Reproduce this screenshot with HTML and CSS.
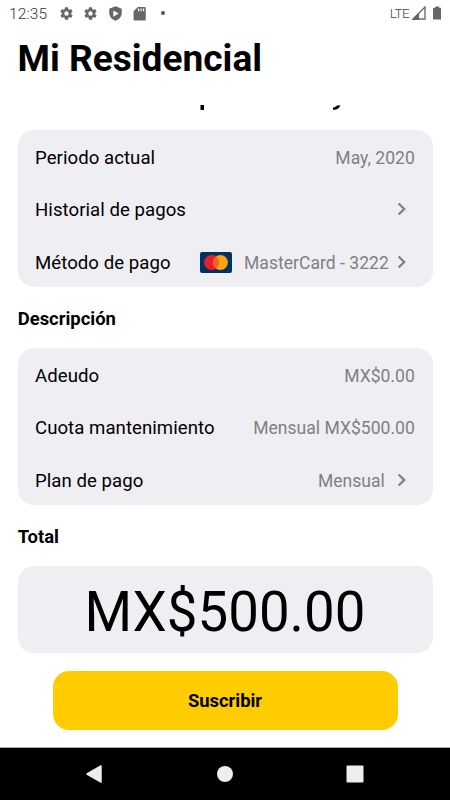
FILE: index.html
```html
<!DOCTYPE html>
<html lang="es">
<head>
<meta charset="utf-8">
<title>Mi Residencial</title>
<link rel="stylesheet" href="styles.css">
</head>
<body>
<svg class="defs" width="0" height="0" aria-hidden="true">
  <symbol id="gear" viewBox="0 0 24 24"><path fill-rule="evenodd" d="M19.4 13a7.800 7.800 0 0 0 0-2l2.100-1.650a.5.5 0 0 0 .12-.64l-2-3.460a.5.5 0 0 0-.61-.22l-2.490 1a7.300 7.300 0 0 0-1.690-.98l-.38-2.650A.49.49 0 0 0 14 2h-4a.49.49 0 0 0-.49.42l-.38 2.650c-.61.25-1.170.59-1.690.98l-2.490-1a.49.49 0 0 0-.61.22l-2 3.460a.49.49 0 0 0 .12.64L4.600 11a7.900 7.900 0 0 0 0 2l-2.110 1.650a.5.5 0 0 0-.12.64l2 3.460c.12.22.39.3.61.22l2.490-1c.52.4 1.080.73 1.690.98l.38 2.650c.03.24.24.42.49.42h4c.25 0 .46-.18.49-.42l.38-2.650a7.700 7.700 0 0 0 1.690-.98l2.490 1c.23.09.49 0 .61-.22l2-3.460a.5.5 0 0 0-.12-.64zM12 15.500a3.500 3.500 0 1 1 0-7 3.500 3.500 0 0 1 0 7z"/></symbol>
  <symbol id="chevron" viewBox="0 0 10 14"><path d="M1.600 1.500 7.200 7 1.600 12.500" fill="none" stroke="currentColor" stroke-width="2.300"/></symbol>
</svg>
<div class="screen">
  <header class="status">
    <span class="clock">12:35</span>
    <svg class="status-icon"><use href="#gear"/></svg>
    <svg class="status-icon"><use href="#gear"/></svg>
    <svg class="status-icon" viewBox="0 0 24 24"><path fill-rule="evenodd" d="M12 .5 2 4.500V11c0 5.800 4.200 10.600 10 12.500 5.800-1.900 10-6.700 10-12.500V4.500zM8.500 7v10l8.500-5z"/></svg>
    <svg class="status-icon" viewBox="0 0 24 24"><path fill-rule="evenodd" d="M20 1.500H9.500L2.500 8.500V21c0 1.100.9 2 2 2H20c1.100 0 2-.9 2-2V3.500c0-1.100-.9-2-2-2zM9.500 4h2v4.500h-2zm4 0h2v4.500h-2zm4 0h2v4.500h-2z"/></svg>
    <i class="dot"></i>
    <span class="network">LTE</span>
    <svg class="signal" viewBox="0 0 14 14"><path d="M13 1v12H1z" fill="none" stroke="#666" stroke-width="1.300"/><path d="M0 14 7 7v7z"/></svg>
    <svg class="battery" viewBox="0 0 9 14"><path d="M2.500 0h4v1.500H8a1 1 0 0 1 1 1V13a1 1 0 0 1-1 1H1a1 1 0 0 1-1-1V2.500a1 1 0 0 1 1-1h1.500z"/></svg>
  </header>
  <h1>Mi Residencial</h1>
  <!-- descenders of the heading scrolled under the title bar -->
  <svg class="scrolled" viewBox="0 0 450 5"><path d="M200.500 0h3.500v5h-3.500zM336.500 .8 340.300 0Q339 4.500 335 4.700L333 4.700V2.700Q335.500 2.500 336.500 .8z"/></svg>
  <main>
    <section class="card">
      <div class="row"><span>Periodo actual</span><span class="value">May, 2020</span></div>
      <div class="row"><span>Historial de pagos</span><svg class="chevron"><use href="#chevron"/></svg></div>
      <div class="row"><span>Método de pago</span>
        <svg class="brand" viewBox="0 0 32 21"><rect width="32" height="21" rx="2" fill="#003262"/><circle cx="11.600" cy="10.500" r="7.500" fill="#ed1c2e"/><circle cx="20.400" cy="10.500" r="7.500" fill="#fca311"/><path d="M16 4.430a7.500 7.500 0 0 1 0 12.140 7.500 7.500 0 0 1 0-12.140z" fill="#f26122"/></svg>
        <span class="value">MasterCard - 3222</span><svg class="chevron"><use href="#chevron"/></svg></div>
    </section>
    <h2>Descripción</h2>
    <section class="card">
      <div class="row"><span>Adeudo</span><span class="value">MX$0.00</span></div>
      <div class="row"><span>Cuota mantenimiento</span><span class="value">Mensual MX$500.00</span></div>
      <div class="row"><span>Plan de pago</span><span class="value plan">Mensual</span><svg class="chevron"><use href="#chevron"/></svg></div>
    </section>
    <h2>Total</h2>
    <section class="card total"><span>MX$500.00</span></section>
    <button class="subscribe">Suscribir</button>
  </main>
  <nav class="navbar">
    <svg viewBox="0 0 18 18"><path d="M16 1v16L2 9z" fill="#eee" stroke="#eee" stroke-linejoin="round" stroke-width="1.500"/></svg>
    <svg viewBox="0 0 18 18"><circle cx="9" cy="9" r="8" fill="#eee"/></svg>
    <svg viewBox="0 0 18 18"><rect x=".5" y=".5" width="17" height="17" rx="1" fill="#eee"/></svg>
  </nav>
</div>
</body>
</html>
```
FILE: styles.css
```css
* { box-sizing: border-box; }
body { margin: 0; font-family: Roboto, sans-serif; background: #fff; color: #000; }
svg { display: block; flex: none; }
.defs { position: absolute; }
.screen { width: 450px; height: 800px; overflow: hidden; display: flex; flex-direction: column; }
.status { height: 26px; flex: none; display: flex; align-items: center; padding: 0 9px; color: #666; fill: #666; }
.clock { width: 50px; font-size: 15.500px; letter-spacing: .1px; line-height: 26px; padding-top: 2px; font-weight: 300; color: #333; }
.status-icon { width: 15px; height: 15px; margin-right: 9.300px; }
.dot { width: 4px; height: 4px; border-radius: 50%; background: #555; margin-left: 5px; }
.network { margin-left: auto; font-size: 13.500px; letter-spacing: -.6px; font-weight: 300; color: #444; }
.signal { width: 14px; height: 14px; margin-left: 2.500px; }
.battery { width: 8.500px; height: 14px; margin: 0 0 0 7px; }
h1 { margin: 0 0 0 17.500px; height: 63px; flex: none; font-size: 37.100px; line-height: 66px; font-weight: 700; white-space: nowrap; }
.scrolled { width: 450px; height: 5px; margin-top: 16px; }
main { flex: 1; padding: 20px 17.500px 0; display: flex; flex-direction: column; }
.card { background: #efeef3; border-radius: 16px; padding: 0 17.700px 0 17.500px; flex: none; margin: 0; }
.row { height: 52.450px; display: flex; align-items: center; font-size: 18.600px; letter-spacing: .05px; padding-top: 3px; white-space: nowrap; }
.row > span:first-child { margin-right: auto; }
.row > .value { color: #808084; font-size: 17.550px; letter-spacing: .02px; }
.plan { margin-right: 4px; }
.chevron { width: 10px; height: 14px; color: #808084; margin: -2px 7.700px 0 8.300px; }
.brand { width: 32px; height: 21px; margin-right: 12px; }
h2 { margin: 0 0 0 .2px; height: 60.650px; line-height: 64px; font-size: 18.450px; font-weight: 700; flex: none; }
.total { height: 87.500px; display: flex; align-items: center; justify-content: center; font-size: 54.600px; padding-top: 5px; }
.subscribe { margin: 17.500px 35px 0; height: 59px; border: 0; border-radius: 16px; background: #fc0; font: 700 18.400px Roboto, sans-serif; color: #000; padding: 1px 0 0; }
.navbar { height: 53px; flex: none; background: #000; border-top: 1px solid #aaa; display: flex; justify-content: space-between; align-items: center; padding: 0 86.500px 0 85px; }
.navbar svg { width: 18px; height: 18px; }
.navbar svg:nth-child(2) { margin-left: 1px; }
```
